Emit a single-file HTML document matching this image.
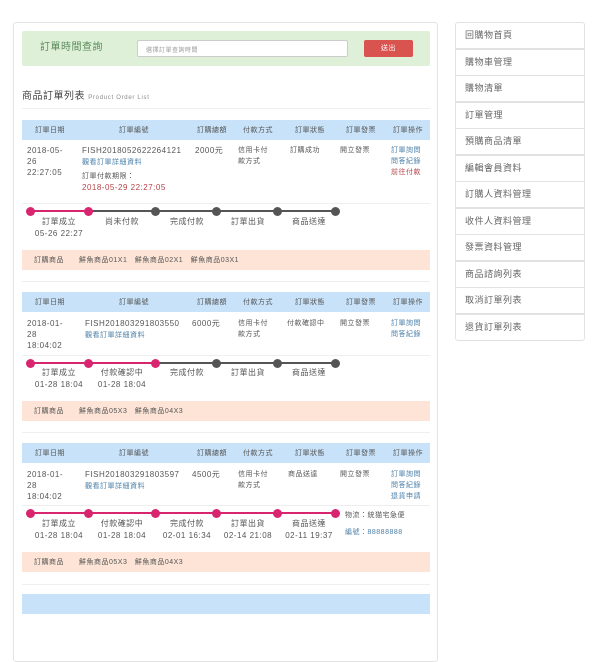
<!DOCTYPE html>
<html><head><meta charset="utf-8"><style>
*{margin:0;padding:0;box-sizing:border-box}
body{width:600px;height:600px;overflow:hidden;background:#fff;position:relative;font-family:"Liberation Sans","Noto Sans CJK TC",sans-serif;color:#555;font-size:8px;letter-spacing:.5px}
.a{position:absolute;white-space:nowrap;line-height:11px}
.c{transform:translateX(-50%)}
.hd{position:absolute;left:22px;width:408px;height:20px;background:#c7e2f9}
.it{position:absolute;left:22px;width:408px;height:20px;background:#fde4d6}
.ln{position:absolute;left:22px;width:408px;height:1px;background:#eee}
.lk{color:#4a7fa8}.rd{color:#b5424a}
.dot{position:absolute;width:9px;height:9px;border-radius:50%;margin:-4.5px 0 0 -4.5px}
.p{background:#d9246f}.g{background:#555}
.bar{position:absolute;height:2px;margin-top:-1px}
.side{position:absolute;left:455px;width:130px;height:27px;border:1px solid #e2e2e2;font-size:9px;color:#666;line-height:25px;padding-left:9px}
</style></head><body>
<div style="position:absolute;left:13px;top:22px;width:425px;height:640px;border:1px solid #e4e4e4;border-radius:3px"></div>
<div style="position:absolute;left:22px;top:31px;width:408px;height:35px;background:#dff0d8;border-radius:2px"></div>
<div class="a" style="left:40px;top:42px;font-size:10px;color:#5a8a5a">訂單時間查詢</div>
<div style="position:absolute;left:137px;top:40px;width:211px;height:17px;background:#fff;border:1px solid #ccc;border-radius:2px;font-size:6px;color:#999;padding:4px 0 0 8px">選擇訂單查詢時間</div>
<div style="position:absolute;left:364px;top:40px;width:49px;height:17px;background:#d9534f;border-radius:2px;color:#fff;font-size:7px;text-align:center;line-height:17px">送出</div>
<div class="a" style="left:22px;top:91px;font-size:10px;color:#444">商品訂單列表 <span style="font-size:6px;color:#888;letter-spacing:.7px">Product Order List</span></div>
<div class="ln" style="top:108px"></div>

<!-- order 1 -->
<div class="hd" style="top:120px"></div>
<div class="a c" style="left:50px;top:125px;font-size:7px">訂單日期</div>
<div class="a c" style="left:134px;top:125px;font-size:7px">訂單編號</div>
<div class="a c" style="left:212px;top:125px;font-size:7px">訂購總額</div>
<div class="a c" style="left:258px;top:125px;font-size:7px">付款方式</div>
<div class="a c" style="left:310px;top:125px;font-size:7px">訂單狀態</div>
<div class="a c" style="left:361px;top:125px;font-size:7px">訂單發票</div>
<div class="a c" style="left:408px;top:125px;font-size:7px">訂單操作</div>
<div class="a" style="left:27px;top:145px">2018-05-<br>26<br>22:27:05</div>
<div class="a" style="left:82px;top:145px">FISH2018052622264121<br><span class="lk" style="font-size:7px">觀看訂單詳細資料</span></div>
<div class="a" style="left:82px;top:170px"><span style="font-size:7px">訂單付款期限：</span><br><span class="rd">2018-05-29 22:27:05</span></div>
<div class="a" style="left:195px;top:145px">2000元</div>
<div class="a" style="left:238px;top:145px;font-size:7px">信用卡付<br>款方式</div>
<div class="a" style="left:290px;top:145px;font-size:7px">訂購成功</div>
<div class="a" style="left:340px;top:145px;font-size:7px">開立發票</div>
<div class="a" style="left:391px;top:145px;font-size:7px"><span class="lk">訂單詢問<br>問答紀錄</span><br><span class="rd">前往付款</span></div>
<div class="ln" style="top:203px"></div>
<div class="bar p" style="left:30px;width:58px;top:211px"></div>
<div class="bar g" style="left:88px;width:247px;top:211px"></div>
<div class="dot p" style="left:30px;top:211px"></div><div class="dot p" style="left:88px;top:211px"></div>
<div class="dot g" style="left:155px;top:211px"></div><div class="dot g" style="left:216px;top:211px"></div>
<div class="dot g" style="left:277px;top:211px"></div><div class="dot g" style="left:335px;top:211px"></div>
<div class="a c" style="left:59px;top:216px">訂單成立</div><div class="a c" style="left:59px;top:228px">05-26 22:27</div>
<div class="a c" style="left:122px;top:216px">尚未付款</div>
<div class="a c" style="left:187px;top:216px">完成付款</div>
<div class="a c" style="left:248px;top:216px">訂單出貨</div>
<div class="a c" style="left:309px;top:216px">商品送達</div>
<div class="it" style="top:250px"></div>
<div class="a" style="left:34px;top:255px;font-size:7px">訂購商品　　鮮魚商品01X1　鮮魚商品02X1　鮮魚商品03X1</div>
<div class="ln" style="top:281px"></div>

<!-- order 2 -->
<div class="hd" style="top:292px"></div>
<div class="a c" style="left:50px;top:297px;font-size:7px">訂單日期</div>
<div class="a c" style="left:134px;top:297px;font-size:7px">訂單編號</div>
<div class="a c" style="left:212px;top:297px;font-size:7px">訂購總額</div>
<div class="a c" style="left:258px;top:297px;font-size:7px">付款方式</div>
<div class="a c" style="left:310px;top:297px;font-size:7px">訂單狀態</div>
<div class="a c" style="left:361px;top:297px;font-size:7px">訂單發票</div>
<div class="a c" style="left:408px;top:297px;font-size:7px">訂單操作</div>
<div class="a" style="left:27px;top:318px">2018-01-<br>28<br>18:04:02</div>
<div class="a" style="left:85px;top:318px">FISH201803291803550<br><span class="lk" style="font-size:7px">觀看訂單詳細資料</span></div>
<div class="a" style="left:192px;top:318px">6000元</div>
<div class="a" style="left:238px;top:318px;font-size:7px">信用卡付<br>款方式</div>
<div class="a" style="left:287px;top:318px;font-size:7px">付款確認中</div>
<div class="a" style="left:340px;top:318px;font-size:7px">開立發票</div>
<div class="a" style="left:391px;top:318px;font-size:7px"><span class="lk">訂單詢問<br>問答紀錄</span></div>
<div class="ln" style="top:355px"></div>
<div class="bar p" style="left:30px;width:125px;top:363px"></div>
<div class="bar g" style="left:155px;width:180px;top:363px"></div>
<div class="dot p" style="left:30px;top:363px"></div><div class="dot p" style="left:88px;top:363px"></div>
<div class="dot p" style="left:155px;top:363px"></div><div class="dot g" style="left:216px;top:363px"></div>
<div class="dot g" style="left:277px;top:363px"></div><div class="dot g" style="left:335px;top:363px"></div>
<div class="a c" style="left:59px;top:367px">訂單成立</div><div class="a c" style="left:59px;top:379px">01-28 18:04</div>
<div class="a c" style="left:122px;top:367px">付款確認中</div><div class="a c" style="left:122px;top:379px">01-28 18:04</div>
<div class="a c" style="left:187px;top:367px">完成付款</div>
<div class="a c" style="left:248px;top:367px">訂單出貨</div>
<div class="a c" style="left:309px;top:367px">商品送達</div>
<div class="it" style="top:401px"></div>
<div class="a" style="left:34px;top:406px;font-size:7px">訂購商品　　鮮魚商品05X3　鮮魚商品04X3</div>
<div class="ln" style="top:432px"></div>

<!-- order 3 -->
<div class="hd" style="top:443px"></div>
<div class="a c" style="left:50px;top:448px;font-size:7px">訂單日期</div>
<div class="a c" style="left:134px;top:448px;font-size:7px">訂單編號</div>
<div class="a c" style="left:212px;top:448px;font-size:7px">訂購總額</div>
<div class="a c" style="left:258px;top:448px;font-size:7px">付款方式</div>
<div class="a c" style="left:310px;top:448px;font-size:7px">訂單狀態</div>
<div class="a c" style="left:361px;top:448px;font-size:7px">訂單發票</div>
<div class="a c" style="left:408px;top:448px;font-size:7px">訂單操作</div>
<div class="a" style="left:27px;top:469px">2018-01-<br>28<br>18:04:02</div>
<div class="a" style="left:85px;top:469px">FISH201803291803597<br><span class="lk" style="font-size:7px">觀看訂單詳細資料</span></div>
<div class="a" style="left:192px;top:469px">4500元</div>
<div class="a" style="left:238px;top:469px;font-size:7px">信用卡付<br>款方式</div>
<div class="a" style="left:288px;top:469px;font-size:7px">商品送達</div>
<div class="a" style="left:340px;top:469px;font-size:7px">開立發票</div>
<div class="a" style="left:391px;top:469px;font-size:7px"><span class="lk">訂單詢問<br>問答紀錄<br>退貨申請</span></div>
<div class="ln" style="top:505px"></div>
<div class="bar p" style="left:30px;width:305px;top:513px"></div>
<div class="dot p" style="left:30px;top:513px"></div><div class="dot p" style="left:88px;top:513px"></div>
<div class="dot p" style="left:155px;top:513px"></div><div class="dot p" style="left:216px;top:513px"></div>
<div class="dot p" style="left:277px;top:513px"></div><div class="dot p" style="left:335px;top:513px"></div>
<div class="a c" style="left:59px;top:518px">訂單成立</div><div class="a c" style="left:59px;top:530px">01-28 18:04</div>
<div class="a c" style="left:122px;top:518px">付款確認中</div><div class="a c" style="left:122px;top:530px">01-28 18:04</div>
<div class="a c" style="left:187px;top:518px">完成付款</div><div class="a c" style="left:187px;top:530px">02-01 16:34</div>
<div class="a c" style="left:248px;top:518px">訂單出貨</div><div class="a c" style="left:248px;top:530px">02-14 21:08</div>
<div class="a c" style="left:309px;top:518px">商品送達</div><div class="a c" style="left:309px;top:530px">02-11 19:37</div>
<div class="a" style="left:345px;top:510px;font-size:7px">物流：統猫宅急便</div>
<div class="a lk" style="left:345px;top:527px;font-size:7px">編號：88888888</div>
<div class="it" style="top:552px"></div>
<div class="a" style="left:34px;top:557px;font-size:7px">訂購商品　　鮮魚商品05X3　鮮魚商品04X3</div>
<div class="ln" style="top:584px"></div>
<div class="hd" style="top:594px"></div>

<!-- sidebar -->
<div class="side" style="top:22px;border-radius:3px 3px 0 0">回購物首頁</div>
<div class="side" style="top:49px">購物車管理</div>
<div class="side" style="top:75px">購物清單</div>
<div class="side" style="top:102px">訂單管理</div>
<div class="side" style="top:128px">預購商品清單</div>
<div class="side" style="top:155px">編輯會員資料</div>
<div class="side" style="top:181px">訂購人資料管理</div>
<div class="side" style="top:208px">收件人資料管理</div>
<div class="side" style="top:234px">發票資料管理</div>
<div class="side" style="top:261px">商品諮詢列表</div>
<div class="side" style="top:287px">取消訂單列表</div>
<div class="side" style="top:314px;border-radius:0 0 3px 3px">退貨訂單列表</div>
</body></html>
